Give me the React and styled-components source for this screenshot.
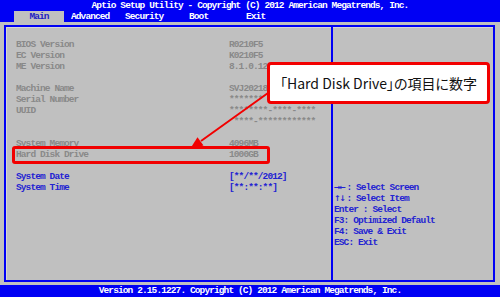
import styled, { createGlobalStyle } from "styled-components"

const GlobalStyle = createGlobalStyle`
    * { box-sizing: border-box; }
    html, body { margin: 0; padding: 0; background: #c0c0c0; }
`

const rows = [
    { label: "BIOS Version", value: "R0210F5" },
    { label: "EC Version", value: "K0210F5" },
    { label: "ME Version", value: "8.1.0.1248" },
    {},
    { label: "Machine Name", value: "SVJ20218CJW" },
    { label: "Serial Number", value: "*******" },
    { label: "UUID", value: "********-****-****" },
    { label: "", value: " ****-************" },
    {},
    { label: "System Memory", value: "4096MB" },
    { label: "Hard Disk Drive", value: "1000GB" },
    {},
    { label: "System Date", value: "[**/**/2012]", active: true },
    { label: "System Time", value: "[**:**:**]", active: true },
]

const help = [
    { keys: "→←", text: ": Select Screen", arrows: true },
    { keys: "↑↓", text: ": Select Item", arrows: true },
    { keys: "Enter", text: " : Select" },
    { keys: "F3", text: ": Optimized Default" },
    { keys: "F4", text: ": Save & Exit" },
    { keys: "ESC", text: ": Exit" },
]

const tabs = [
    { name: "Main", left: 14, width: 50, active: true },
    { name: "Advanced", left: 7, width: 47 },
    { name: "Security", left: 7, width: 57 },
    { name: "Boot", left: 7, width: 50 },
    { name: "Exit", left: 7, width: 30 },
]

export default function App() {
    return (
        <Screen>
            <GlobalStyle />
            <TitleBar>Aptio Setup Utility - Copyright (C) 2012 American Megatrends, Inc.</TitleBar>
            <TabBar>
                {tabs.map((t) => (
                    <Tab key={t.name} $active={t.active} $left={t.left} $width={t.width}>{t.name}</Tab>
                ))}
            </TabBar>
            <Body>
                <Frame>
                    <MainPane>
                        {rows.map((r, i) => (
                            <Row key={i} $active={r.active}>
                                <Label>{r.label}</Label>
                                <Value>{r.value}</Value>
                            </Row>
                        ))}
                    </MainPane>
                    <HelpPane>
                        {help.map((h) => (
                            <HelpLine key={h.keys}>
                                <HelpKey $arrows={h.arrows}>{h.keys}</HelpKey>{h.text}
                            </HelpLine>
                        ))}
                    </HelpPane>
                </Frame>
            </Body>
            <Footer>Version 2.15.1227. Copyright (C) 2012 American Megatrends, Inc.</Footer>

            <Highlight />
            <Arrow viewBox="0 0 500 297" width="500" height="297">
                <line x1="268" y1="93" x2="201" y2="141" stroke="#f20000" strokeWidth="2" />
                <polygon points="190,149 203.5,145.4 197.5,137.3" fill="#f20000" />
            </Arrow>
            <Callout>「Hard Disk Drive」の項目に数字</Callout>
        </Screen>
    )
}

const Screen = styled.div`
    position: relative;
    width: 500px;
    height: 297px;
    display: flex;
    flex-direction: column;
    background: #c0c0c0;
    font-family: "Liberation Mono", "Courier New", monospace;
    font-weight: 700;
    font-size: 9.5px;
    letter-spacing: -0.9px;
    overflow: hidden;
`

const TitleBar = styled.div`
    height: 11px;
    background: #0000f4;
    color: #ffffff;
    text-align: center;
    line-height: 12px;
    white-space: pre;
`

const TabBar = styled.div`
    height: 11px;
    background: #0000f4;
    display: flex;
    align-items: stretch;
`

const Tab = styled.div`
    margin-left: ${(p) => p.$left}px;
    width: ${(p) => p.$width}px;
    text-align: ${(p) => (p.$active ? "center" : "left")};
    background: ${(p) => (p.$active ? "#c0c0c0" : "transparent")};
    color: ${(p) => (p.$active ? "#1c1cc4" : "#ffffff")};
    line-height: 11px;
    white-space: pre;
`

const Body = styled.div`
    flex: 1;
    padding: 3px 5px 3px 4px;
    display: flex;
`

const Frame = styled.div`
    flex: 1;
    border: 2px solid #0000f4;
    box-shadow: inset 1px 1px 0 #d6d6d6;
    display: grid;
    grid-template-columns: 325px 2px 1fr;
    &::before {
        content: "";
        grid-column: 2;
        grid-row: 1;
        background: #0000f4;
    }
`

const MainPane = styled.div`
    grid-column: 1;
    grid-row: 1;
    padding: 12px 0 0 10px;
`

const Row = styled.div`
    display: flex;
    height: 11px;
    line-height: 11px;
    white-space: pre;
    color: ${(p) => (p.$active ? "#2323d2" : "#898989")};
`

const Label = styled.span`
    width: 213px;
`

const Value = styled.span``

const HelpPane = styled.div`
    grid-column: 3;
    grid-row: 1;
    padding: 155px 0 0 1px;
    color: #2323d2;
`

const HelpLine = styled.div`
    height: 11px;
    line-height: 11px;
    white-space: pre;
`

const HelpKey = styled.span`
    font-family: ${(p) => (p.$arrows ? '"DejaVu Sans", sans-serif' : "inherit")};
    font-size: ${(p) => (p.$arrows ? "8px" : "inherit")};
    letter-spacing: ${(p) => (p.$arrows ? "-1.5px" : "inherit")};
    margin-right: ${(p) => (p.$arrows ? "2px" : "0")};
`

const Footer = styled.div`
    height: 12px;
    background: #0000f4;
    color: #ffffff;
    text-align: center;
    line-height: 12px;
    white-space: pre;
`

const Highlight = styled.div`
    position: absolute;
    left: 12px;
    top: 146px;
    width: 258px;
    height: 18px;
    border: 3px solid #f20000;
    border-radius: 3px;
`

const Arrow = styled.svg`
    position: absolute;
    left: 0;
    top: 0;
    pointer-events: none;
`

const Callout = styled.div`
    position: absolute;
    left: 267px;
    top: 62px;
    width: 223px;
    height: 42px;
    background: #ffffff;
    border: 3px solid #f20000;
    border-radius: 4px;
    display: flex;
    align-items: center;
    justify-content: center;
    font-family: "Noto Sans CJK JP", "Noto Sans", sans-serif;
    font-feature-settings: "palt";
    font-weight: 400;
    font-size: 14px;
    letter-spacing: 0;
    color: #111111;
    white-space: nowrap;
`
